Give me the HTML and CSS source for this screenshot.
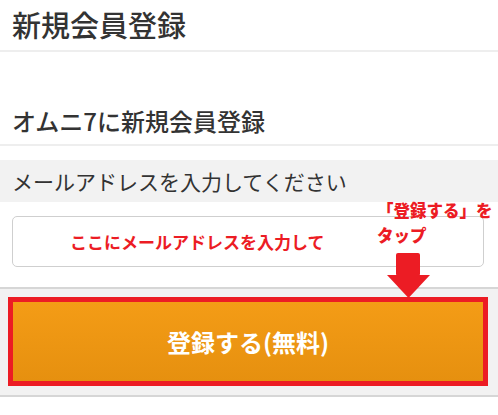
FILE: index.html
```html
<!DOCTYPE html>
<html lang="ja">
<head>
<meta charset="utf-8">
<title>新規会員登録</title>
<link rel="stylesheet" href="styles.css">
</head>
<body>
<div class="page">
  <header class="title-bar"><h1 class="title">新規会員登録</h1></header>
  <section class="intro"><h2 class="intro-heading">オムニ7に新規会員登録</h2></section>
  <div class="label-band">メールアドレスを入力してください</div>
  <div class="input-area">
    <div class="email-input"><span class="hint">ここにメールアドレスを入力して</span></div>
  </div>
  <div class="button-area">
    <button class="submit" type="button">登録する(無料)</button>
  </div>
  <div class="callout">「登録する」を<br>タップ</div>
  <svg class="arrow" width="43" height="45" viewBox="0 0 43 45">
    <rect x="9" y="0" width="24" height="23" rx="2" fill="#ec1c24"/>
    <polygon points="0,22 43,22 21.5,45" fill="#ec1c24"/>
  </svg>
</div>
</body>
</html>
```
FILE: styles.css
```css
html, body {
  margin: 0;
  padding: 0;
  background: #fff;
}
.page {
  position: relative;
  width: 498px;
  height: 415px;
  overflow: hidden;
  font-family: "Noto Sans CJK JP", "Noto Sans", sans-serif;
  color: #333;
}
.title-bar {
  height: 50px;
  border-bottom: 2px solid #eeeeee;
}
.title {
  margin: 0;
  padding-left: 12px;
  font-size: 29px;
  font-weight: 500;
  line-height: 48px;
}
.intro {
  height: 39px;
  padding-top: 53px;
  border-bottom: 2px solid #eeeeee;
}
.intro-heading {
  margin: 0;
  padding-left: 12px;
  font-size: 24px;
  font-weight: 500;
  line-height: 32px;
}
.label-band {
  margin-top: 14px;
  height: 42px;
  line-height: 42px;
  padding-left: 12px;
  background: #f2f2f2;
  font-size: 21px;
}
.input-area {
  height: 85px;
  padding-top: 14px;
  box-sizing: border-box;
}
.email-input {
  margin-left: 12px;
  width: 472px;
  height: 51px;
  box-sizing: border-box;
  border: 1.5px solid #cfcfcf;
  border-radius: 5px;
  display: flex;
  align-items: center;
  padding-left: 57px;
}
.hint {
  color: #ec1c24;
  font-size: 17px;
  font-weight: 700;
}
.button-area {
  border-top: 2px solid #d6d6d6;
  border-bottom: 2px solid #d6d6d6;
  background: #f2f2f2;
  height: 98px;
  padding-top: 8px;
}
.submit {
  display: block;
  margin: 0 0 0 8px;
  width: 480px;
  height: 89px;
  box-sizing: border-box;
  border: 5px solid #ec1c24;
  background: linear-gradient(#f49c16, #e6900f);
  color: #fff;
  font-family: "Noto Sans CJK JP", "Noto Sans", sans-serif;
  font-size: 24px;
  font-weight: 700;
  padding: 0;
}
.callout {
  position: absolute;
  left: 377px;
  top: 198px;
  color: #ec1c24;
  font-size: 16.5px;
  font-weight: 900;
  line-height: 25px;
}
.arrow {
  position: absolute;
  left: 387px;
  top: 253px;
}
```
